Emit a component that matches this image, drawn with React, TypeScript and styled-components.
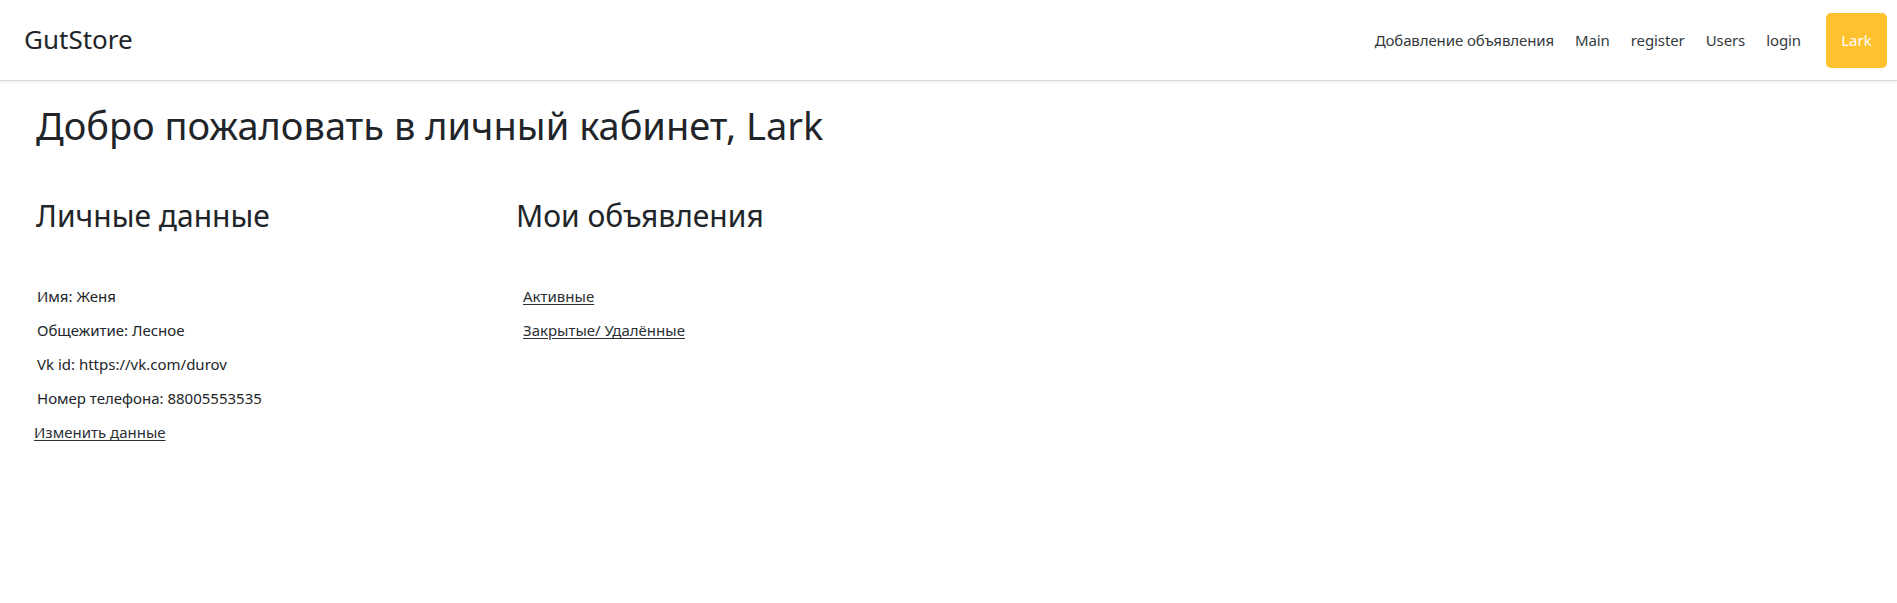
import React from "react";
import styled, { createGlobalStyle } from "styled-components";

const Global = createGlobalStyle`
  html, body { margin: 0; padding: 0; background: #fff; }
  body {
    font-family: "Noto Sans", "Open Sans", sans-serif;
    color: #212529;
    -webkit-font-smoothing: antialiased;
  }
`;

const Navbar = styled.header`
  height: 80px;
  display: flex;
  align-items: center;
  justify-content: space-between;
  padding: 0 10px 0 24px;
  background: #fff;
  border-bottom: 1px solid #dcdcdc;
  box-shadow: 0 1px 3px rgba(0, 0, 0, 0.08);
`;

const Brand = styled.a`
  font-size: 26px;
  color: #212529;
  text-decoration: none;
  line-height: 1;
  margin-top: -2px;
`;

const Nav = styled.nav`
  display: flex;
  align-items: center;
  gap: 21px;
`;

const NavLink = styled.a`
  font-size: 15px;
  letter-spacing: -0.1px;
  color: #343a40;
  text-decoration: none;
`;

const UserButton = styled.a`
  display: flex;
  align-items: center;
  justify-content: center;
  width: 61px;
  height: 55px;
  margin-left: 4px;
  background: #ffc12d;
  color: #fff;
  border-radius: 5px;
  font-size: 15px;
  text-decoration: none;
`;

const Main = styled.main`
  padding: 20px 36px;
`;

const Title = styled.h1`
  margin: 0;
  font-size: 38px;
  font-weight: 400;
  line-height: 48px;
`;

const Columns = styled.div`
  display: grid;
  grid-template-columns: 480px 1fr;
  margin-top: 48px;
`;

const Column = styled.section``;

const SectionTitle = styled.h2`
  margin: 0 0 49px;
  font-size: 30px;
  font-weight: 400;
  line-height: 38px;
`;

const Info = styled.p`
  margin: 0 0 10px;
  padding-left: 1px;
  font-size: 15px;
  line-height: 24px;
`;

const TextLink = styled.a<{ $indent?: number }>`
  display: block;
  width: max-content;
  margin: 0 0 10px ${(p) => p.$indent ?? 0}px;
  font-size: 15px;
  line-height: 24px;
  color: #2b3035;
  text-decoration: underline;
  text-underline-offset: 2px;
`;

export default function App() {
  return (
    <>
      <Global />
      <Navbar>
        <Brand href="#">GutStore</Brand>
        <Nav>
          <NavLink href="#">Добавление объявления</NavLink>
          <NavLink href="#">Main</NavLink>
          <NavLink href="#">register</NavLink>
          <NavLink href="#">Users</NavLink>
          <NavLink href="#">login</NavLink>
          <UserButton href="#">Lark</UserButton>
        </Nav>
      </Navbar>
      <Main>
        <Title>Добро пожаловать в личный кабинет, Lark</Title>
        <Columns>
          <Column>
            <SectionTitle>Личные данные</SectionTitle>
            <Info>Имя: Женя</Info>
            <Info>Общежитие: Лесное</Info>
            <Info>Vk id: https://vk.com/durov</Info>
            <Info>Номер телефона: 88005553535</Info>
            <TextLink href="#" $indent={-2}>Изменить данные</TextLink>
          </Column>
          <Column>
            <SectionTitle>Мои объявления</SectionTitle>
            <TextLink href="#" $indent={7}>Активные</TextLink>
            <TextLink href="#" $indent={7}>Закрытые/ Удалённые</TextLink>
          </Column>
        </Columns>
      </Main>
    </>
  );
}
